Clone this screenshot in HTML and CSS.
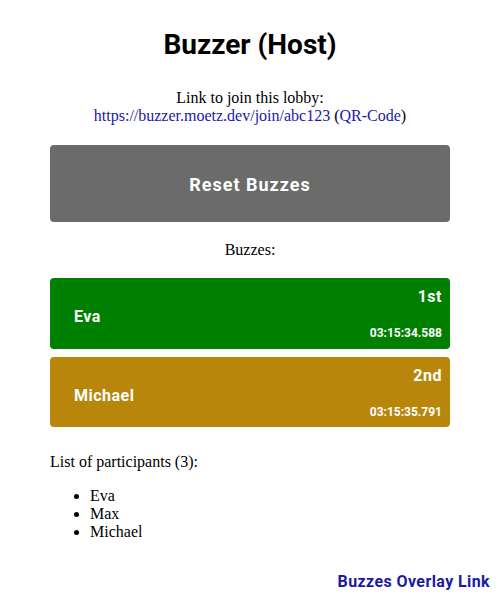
FILE: index.html
```html
<!DOCTYPE html>
<html>
<head>
<meta charset="utf-8">
<link rel="stylesheet" href="styles.css">
</head>
<body>
<main class="page">
  <h1 class="title">Buzzer (Host)</h1>
  <p class="join">Link to join this lobby:<br><a class="link" href="#">https://buzzer.moetz.dev/join/abc123</a> (<a class="link" href="#">QR-Code</a>)</p>
  <button class="reset">Reset Buzzes</button>
  <p class="label">Buzzes:</p>
  <div class="buzzes">
    <div class="buzz buzz-first">
      <div class="rank">1st</div>
      <div class="name">Eva</div>
      <div class="time">03:15:34.588</div>
    </div>
    <div class="buzz buzz-second">
      <div class="rank">2nd</div>
      <div class="name">Michael</div>
      <div class="time">03:15:35.791</div>
    </div>
  </div>
  <p class="list-title">List of participants (3):</p>
  <ul class="participants">
    <li>Eva</li>
    <li>Max</li>
    <li>Michael</li>
  </ul>
</main>
<footer class="footer"><a class="overlay-link" href="#">Buzzes Overlay Link</a></footer>
</body>
</html>
```
FILE: styles.css
```css
html, body {
  margin: 0;
  padding: 0;
  background: #ffffff;
}
body {
  font-family: "Liberation Serif", "Times New Roman", serif;
  font-size: 16px;
  color: #000;
}
.page {
  width: 400px;
  margin: 0 auto;
  padding-top: 28px;
}
.title {
  font-family: Roboto, "Liberation Sans", sans-serif;
  font-weight: 700;
  font-size: 28px;
  line-height: 34px;
  text-align: center;
  margin: 0 0 27px;
}
.join {
  margin: 0 0 19px;
  text-align: center;
  line-height: 18.4px;
}
.link {
  color: #1a1aa6;
  text-decoration: none;
}
.reset {
  display: block;
  width: 100%;
  height: 77.5px;
  border: none;
  border-radius: 4px;
  background: #6b6b6b;
  color: #fff;
  font-family: Roboto, "Liberation Sans", sans-serif;
  font-weight: 700;
  font-size: 18px;
  letter-spacing: 1px;
  padding: 1px 0 0;
}
.label {
  text-align: center;
  margin: 19px 0;
  line-height: 18px;
}
.buzzes {
  display: flex;
  flex-direction: column;
  gap: 8px;
}
.buzz {
  display: grid;
  grid-template-rows: 20px 20px 13.5px;
  padding: 9px 8px 8px 24px;
  border-radius: 4px;
  color: #fff;
  font-family: Roboto, "Liberation Sans", sans-serif;
  font-weight: 700;
}
.buzz-first { background: #008000; }
.buzz-second { background: #b8860b; }
.rank {
  text-align: right;
  font-size: 16px;
  line-height: 20px;
  letter-spacing: 0.5px;
}
.name {
  font-size: 16px;
  line-height: 20px;
  letter-spacing: 0.5px;
}
.time {
  text-align: right;
  font-size: 12px;
  line-height: 13.5px;
}
.list-title {
  margin: 26px 0 16px;
  line-height: 18px;
}
.participants {
  margin: 0;
  padding-left: 40px;
  line-height: 18px;
}
.footer {
  text-align: right;
  padding: 31px 10px 0;
  line-height: 19px;
}
.overlay-link {
  font-family: Roboto, "Liberation Sans", sans-serif;
  font-weight: 700;
  font-size: 16px;
  letter-spacing: 0.4px;
  color: #1a1aa6;
  text-decoration: none;
}
```
